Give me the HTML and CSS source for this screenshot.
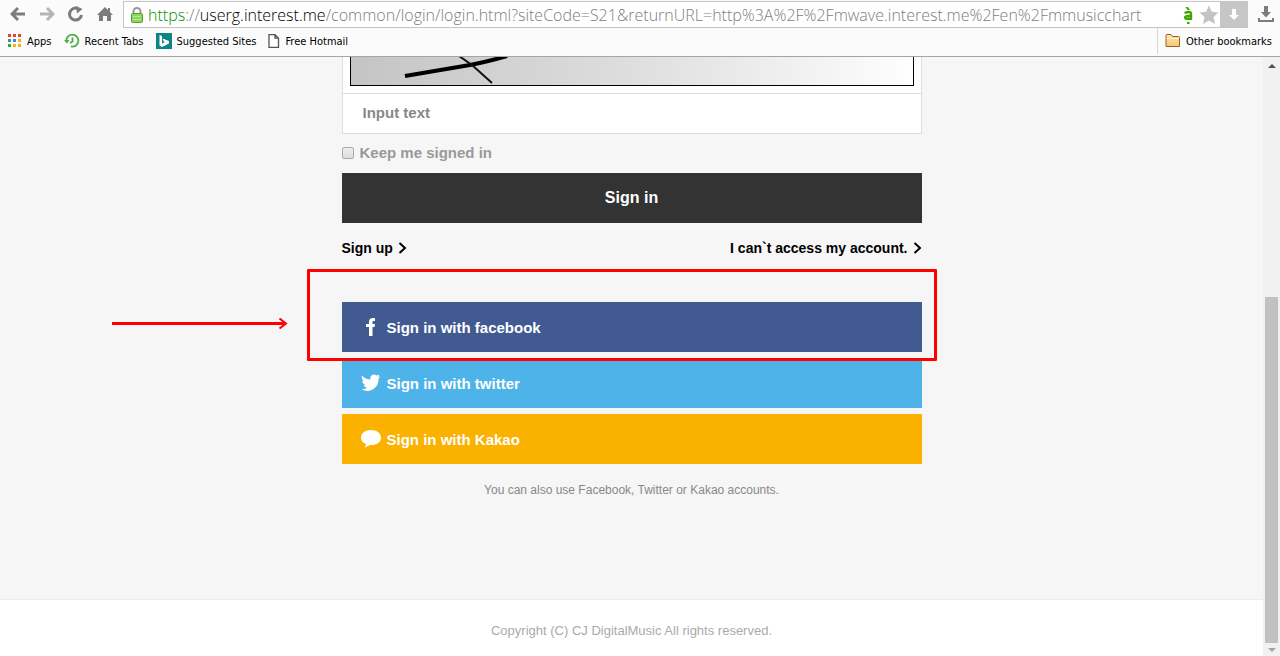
FILE: index.html
```html
<!doctype html>

<html lang="en">
<head>
  <meta charset="utf-8">
  <title>Sign in</title>
  <link rel="stylesheet" href="styles.css">
</head>
<body>
	<header class="browser">
		<div class="toolbar">
			<button class="tool" aria-label="Back"><svg width="16" height="16" viewBox="0 0 16 16"><path class="stroke" d="M8 2 L2 8 L8 14 M2 8 H15"/></svg></button>
			<button class="tool faded" aria-label="Forward"><svg width="16" height="16" viewBox="0 0 16 16"><path class="stroke" d="M8 2 L14 8 L8 14 M14 8 H1"/></svg></button>
			<button class="tool" aria-label="Reload"><svg width="16" height="16" viewBox="0 0 16 16"><path class="stroke" d="M13.5 9 A6 6 0 1 1 9.5 2.4"/><path d="M8 0 L14.5 3 L9 7.5z"/></svg></button>
			<button class="tool" aria-label="Home"><svg width="16" height="16" viewBox="0 0 16 16"><path d="M8 1 L11 4 V2 H13 V6 L16 9 H14 V15 H10 V10 H6 V15 H2 V9 H0z"/></svg></button>
			<div class="address">
				<svg class="lock" width="12" height="16" viewBox="0 0 12 16">
					<path d="M2.5 8 V4.5 A3.5 3.5 0 0 1 9.5 4.5 V8" fill="none" stroke="#999" stroke-width="2"/>
					<rect x="0.5" y="6.5" width="11" height="9" rx="1" fill="#8fd45f" stroke="#5b9a39"/>
					<path d="M2 9.5 H10 M2 12.5 H10" stroke="#b5eb8c"/>
				</svg>
				<span class="scheme">https</span><span>://</span><span class="host">userg.interest.me</span>
				<input class="path" type="text" aria-label="Address" value="/common/login/login.html?siteCode=S21&amp;returnURL=http%3A%2F%2Fmwave.interest.me%2Fen%2Fmmusicchart">
				<button class="ext" aria-label="Extension"><svg width="12" height="18" viewBox="0 0 12 18"><path d="M2.500 7 Q9 4.500 9 8 V14 M9 10 Q3 9.500 3 11.500 Q3.500 14 9 12" fill="none" stroke="#3fa800" stroke-width="2.400"/><path d="M3.500 1 L6 1 L8 4 H5.500z M5 16 h2.500 v2 h-2.500z" fill="#3fa800"/></svg></button>
				<button class="star" aria-label="Bookmark"><svg width="20" height="20" viewBox="0 0 20 20"><path d="M10 0.500 L12.800 6.700 L19.500 7.500 L14.500 12 L16 19 L10 15.500 L4 19 L5.500 12 L0.500 7.500 L7.200 6.700z" fill="#c3c3c3"/></svg></button>
				<button class="save" aria-label="Save"><svg width="12" height="14" viewBox="0 0 12 14"><path d="M4 1 H8 V7 H11 L6 12 L1 7 H4z" fill="#fff"/></svg></button>
			</div>
			<button class="tool" aria-label="Downloads"><svg width="16" height="16" viewBox="0 0 16 16"><path d="M6 0 H10 V6 H13 L8 11.500 L3 6 H6z M0 12 H2 V14 H14 V12 H16 V16 H0z"/></svg></button>
		</div>
		<nav class="bookmarks">
			<a href="#">
				<svg width="14" height="14" viewBox="0 0 14 14">
					<path d="M0 0h3v3H0z M5 0h3v3H5z M10 0h3v3h-3z" fill="#eb4132"/>
					<path d="M0 5h3v3H0z M0 10h3v3H0z" fill="#34a350"/>
					<path d="M5 5h3v3H5z" fill="#4285f4"/>
					<path d="M10 5h3v3h-3z M5 10h3v3H5z M10 10h3v3h-3z" fill="#fbb305"/>
				</svg>Apps</a>
			<a href="#"><svg width="16" height="14" viewBox="0 0 16 14"><path d="M2.500 8 A6 6 0 1 1 7 12.500 M8.500 3.500 V7.500 L6 9" fill="none" stroke="#4cae4c" stroke-width="1.800"/><path d="M0 6 H5.500 L3 9.500z" fill="#4cae4c"/></svg>Recent Tabs</a>
			<a href="#"><svg width="16" height="16" viewBox="0 0 16 16"><path d="M0 0h16v16H0z" fill="#0c8484"/><path d="M3.500 2 L6 3 V10.500 L9 9 L7.500 8.300 L6.500 5.500 L13 8 V10.500 L6 14 L3.500 12.500z" fill="#fff"/></svg>Suggested Sites</a>
			<a href="#" class="file"><svg width="12" height="14" viewBox="0 0 12 14"><path d="M1 0.700 H7 L10.500 4.200 V13.300 H1z M7 0.700 V4.200 H10.500" fill="#fff" stroke="#555" stroke-width="1.300"/></svg>Free Hotmail</a>
			<a href="#" class="other">
				<svg width="16" height="14" viewBox="0 0 16 14">
					<defs><linearGradient id="folder" x1="0" y1="0" x2="0" y2="1"><stop offset="0" stop-color="#ffe7b0"/><stop offset="1" stop-color="#f8c56c"/></linearGradient></defs>
					<path d="M1 12.500 V1.500 Q1 0.500 2 0.500 H6 L7.500 2.500 H13.500 Q14.500 2.500 14.500 3.500 V12.500z" fill="url(#folder)" stroke="#92602c"/>
					<path d="M1.500 4.500 H14" stroke="#fff2cf"/>
				</svg>Other bookmarks</a>
		</nav>
	</header>

	<div class="window">
		<div class="page">
			<main class="login">
				<form class="form">
					<div class="captcha">
						<svg class="captcha-image" viewBox="0 0 562 28" preserveAspectRatio="none" role="img" aria-label="Captcha">
							<defs><linearGradient id="shade"><stop offset="0" stop-color="#c4c4c4"/><stop offset="0.500" stop-color="#dedede"/><stop offset="1" stop-color="#fefefe"/></linearGradient></defs>
							<path d="M0 0h562v28H0z" fill="url(#shade)"/>
							<path d="M54 19 L119 8 Q135 5 156 -1" fill="none" stroke="#000" stroke-width="4"/>
							<path d="M108 -1 L121 8 L141 26" fill="none" stroke="#111" stroke-width="2"/>
						</svg>
					</div>
					<input class="answer" type="text" placeholder="Input text" aria-label="Input text">
					<label class="keep"><input type="checkbox">Keep me signed in</label>
					<button class="submit" type="button">Sign in</button>
					<div class="links">
						<a href="#">Sign up<svg width="9" height="12" viewBox="0 0 9 12"><path d="M1.500 1 L7 6 L1.500 11"/></svg></a>
						<a href="#">I can`t access my account.<svg width="9" height="12" viewBox="0 0 9 12"><path d="M1.500 1 L7 6 L1.500 11"/></svg></a>
					</div>
				</form>

				<div class="social">
					<button class="facebook"><svg width="20" height="18" viewBox="0 0 20 18"><path d="M8 18 V9 H5 V6 H8 V4 Q8 0 12 0 H14 V3 H12.500 Q11.500 3 11.500 4 V6 H14 L13.500 9 H11.500 V18z"/></svg>Sign in with facebook</button>
					<button class="twitter"><svg width="20" height="18" viewBox="0 0 20 18"><path d="M1 1.500 Q4.500 5.500 9.500 5.500 C8.500 1.500 12.500 -1 15.500 1.500 L18.500 0.500 L17.300 2.800 L19.300 2.500 L17.500 4.700 C18 12 12 17 6.500 17 Q3 17 0.500 15.300 Q4 15.500 6 13.600 Q3.200 13.200 2.500 11 H4.200 Q1.300 9.800 1 7 L2.700 7.400 Q0 4.700 1 1.500z"/></svg>Sign in with twitter</button>
					<button class="kakao"><svg width="20" height="18" viewBox="0 0 20 18"><path d="M10 0 C16 0 20 3.500 20 7.500 C20 12.500 15 15.500 9 15 L4 17.500 L5 14 C2 13 0 11 0 7.500 C0 3.500 4 0 10 0z"/></svg>Sign in with Kakao</button>
					<div class="highlight"></div>
					<svg class="arrow" width="176" height="12" viewBox="0 0 176 12"><path d="M0 6.500 H172" stroke-width="3"/><path d="M167.500 1.500 L174 6.500 L167.500 11.500" stroke-width="2"/></svg>
				</div>
				<p class="note">You can also use Facebook, Twitter or Kakao accounts.</p>
			</main>
			<footer class="footer">Copyright (C) CJ DigitalMusic All rights reserved.</footer>
		</div>
		<div class="scrollbar">
			<button class="up" aria-label="Scroll up"><svg width="8" height="4" viewBox="0 0 8 4"><path d="M0 4 L4 0 L8 4z" fill="#505050"/></svg></button>
			<div class="track"><div class="thumb"></div></div>
			<button class="down" aria-label="Scroll down"><svg width="8" height="4" viewBox="0 0 8 4"><path d="M0 0 L4 4 L8 0z" fill="#a3a3a3"/></svg></button>
		</div>
	</div>
</body>
</html>
```

FILE: styles.css
```css
html,body{
	margin:0; padding:0;
	height: 100%;
	font-family: "Liberation Sans", Arial, sans-serif;
}
body{
	display: flex;
	flex-direction: column;
	overflow: hidden;
	background: #f6f6f6;
}
*{ box-sizing: border-box; }
button{ border:none; padding:0; background:none; font-family:inherit; cursor:pointer; }
a{ text-decoration:none; color:inherit; }
svg{ flex:none; }

/* browser bars */
.browser{
	flex: none;
	background: #fbfbfb;
	border-bottom: 1px solid #a5a5a5;
}
.toolbar{
	display: flex;
	align-items: center;
	height: 28px;
	padding: 0 6px 0 3px;
}
.tool{
	display: flex;
	justify-content: center;
	width: 29px;
}
.tool svg{ fill:#7c7c7c; }
.tool .stroke{ fill:none; stroke:#7c7c7c; stroke-width:3; }
.tool.faded{ opacity:0.55; }
.tool:last-child{ width:26px; justify-content:flex-end; }
.address{
	display: flex;
	align-items: center;
	flex: 1;
	min-width: 0;
	height: 27px;
	margin: 1px 0 0 4px;
	padding-left: 7px;
	background: #fff;
	border: 1px solid #c4c4c4;
	border-right: none;
	font: 300 16px "Open Sans", sans-serif;
	color: #7d7d7d;
}
.lock{ margin-right:5px; }
.scheme{ color:#0a9000; }
.host{ color:#000; }
.path{
	flex: 1;
	min-width: 0;
	padding: 0;
	border: none;
	background: none;
	font: inherit;
	color: inherit;
}
.ext,.star,.save{ display:flex; align-items:center; justify-content:center; }
.ext{ width:20px; }
.star{ width:22px; }
.save{ width:28px; height:100%; background:#c6c6c6; }

.bookmarks{
	display: flex;
	align-items: center;
	height: 28px;
	padding: 0 8px 2px;
	gap: 12px;
	font-family: "DejaVu Sans Condensed", "DejaVu Sans", sans-serif;
	font-size: 11px;
	color: #000;
}
.bookmarks a{ display:flex; align-items:center; gap:5px; }
.bookmarks .other{
	height: 26px;
	margin-left: auto;
	padding-left: 7px;
	border-left: 1px solid #d0d8de;
}

/* page */
.window{ display:flex; flex:1; min-height:0; }
.page{
	display: flex;
	flex-direction: column;
	flex: 1;
}
.login{
	flex: 1;
	width: 580px;
	max-width: 100%;
	margin: 0 auto;
}
.captcha{
	padding: 0 7px 7px;
	background: #fff;
	border: 1px solid #dedede;
	border-top: none;
}
.captcha-image{
	display: block;
	width: 100%;
	height: 29px;
	border: 1px solid #000;
	border-top: none;
}
.answer{
	display: block;
	width: 100%;
	height: 40px;
	padding: 0 20px 2px;
	border: 1px solid #dedede;
	border-top: none;
	background: #fff;
	font: bold 15px "Liberation Sans", Arial, sans-serif;
}
.answer::placeholder{ color:#888; opacity:1; }
.keep{
	display: flex;
	align-items: center;
	gap: 6px;
	height: 39px;
	padding-bottom: 2px;
	font-size: 15px;
	font-weight: bold;
	color: #999;
}
.keep input{
	appearance: none;
	width: 12px;
	height: 12px;
	margin: 0;
	border: 1px solid #aaa;
	border-radius: 2px;
	background: linear-gradient(#eee, #dcdcdc);
}
.submit{
	display: block;
	width: 100%;
	height: 50px;
	background: #333;
	color: #fff;
	font-size: 16px;
	font-weight: bold;
}
.links{
	display: flex;
	justify-content: space-between;
	padding-top: 16px;
	font-size: 14px;
	font-weight: bold;
	line-height: 18px;
	color: #000;
}
.links a{ display:flex; align-items:center; gap:5px; }
.links path{ fill:none; stroke:#000; stroke-width:2; }

.social{
	position: relative;
	display: flex;
	flex-direction: column;
	gap: 6px;
	margin-top: 45px;
}
.social button{
	display: flex;
	align-items: center;
	gap: 6px;
	height: 50px;
	padding-left: 19px;
	color: #fff;
	font-size: 15px;
	font-weight: bold;
}
.social button svg{ fill:#fff; }
.facebook{ background:#425a92; }
.twitter{ background:#4db3e9; }
.kakao{ background:#fbb100; }

/* callout drawn over the facebook button */
.highlight{
	position: absolute;
	top: -33px;
	left: -35px;
	right: -15px;
	height: 92px;
	border: 3px solid #f00;
	border-radius: 1px;
	pointer-events: none;
}
.arrow{
	position: absolute;
	top: 15px;
	left: -230px;
	fill: none;
	stroke: #f00;
}
.note{
	margin: 18px 0 0;
	font-size: 12px;
	line-height: 16px;
	text-align: center;
	color: #888;
}
.footer{
	padding: 22px 0 17px;
	background: #fff;
	border-top: 1px solid #ececec;
	font-size: 13px;
	line-height: 17px;
	text-align: center;
	color: #aaa;
}

.scrollbar{
	display: flex;
	flex-direction: column;
	width: 17px;
	background: #f1f1f1;
}
.scrollbar button{
	display: flex;
	align-items: center;
	justify-content: center;
}
.scrollbar .up{ height:18px; }
.scrollbar .down{ height:13px; }
.track{
	display: flex;
	flex-direction: column;
	justify-content: flex-end;
	flex: 1;
	padding: 0 2px;
}
.thumb{ height:61%; background:#c1c1c1; }
```
